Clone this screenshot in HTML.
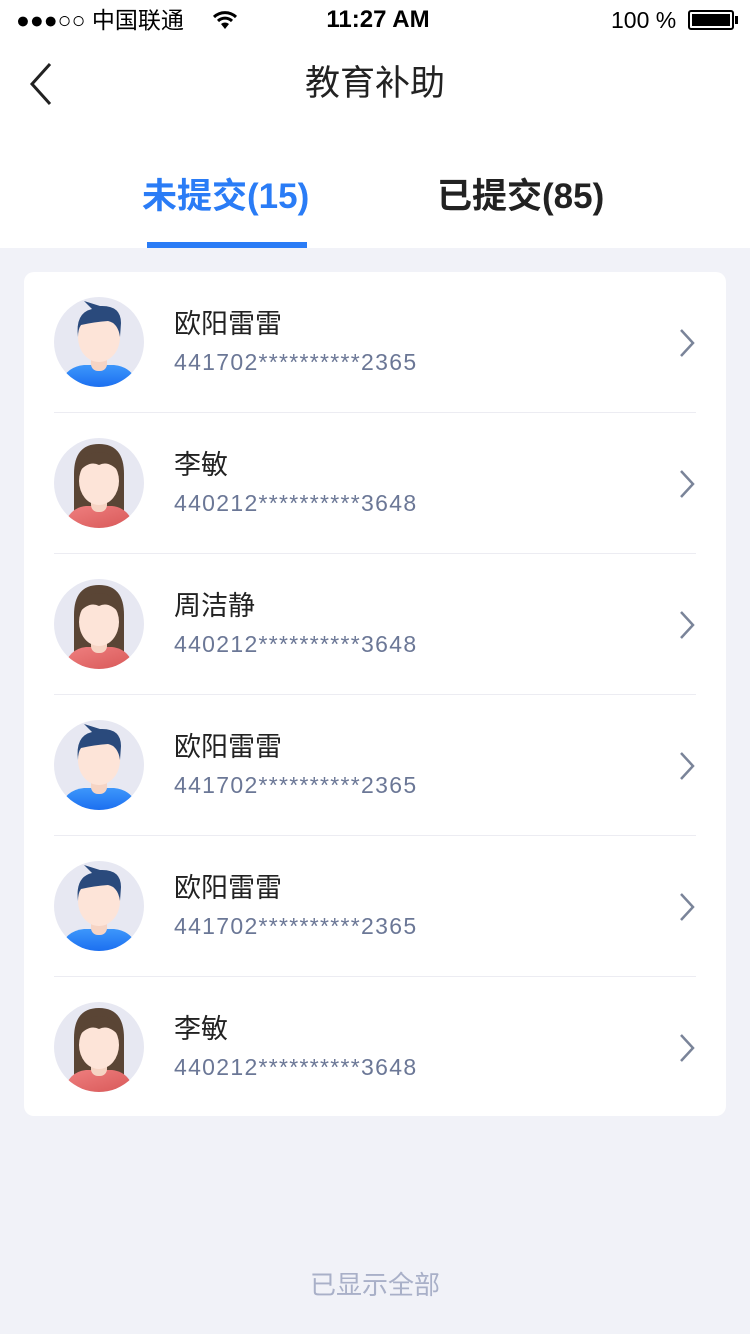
<!DOCTYPE html>
<html><head><meta charset="utf-8"><style>
*{margin:0;padding:0;box-sizing:border-box}
body{width:750px;height:1334px;background:#f1f2f8;font-family:"Liberation Sans","Noto Sans CJK SC",sans-serif;position:relative;overflow:hidden}
.top{position:absolute;left:0;top:0;width:750px;height:248px;background:#fff}
.abs{position:absolute}
.card{position:absolute;left:24px;top:272px;width:702px;height:844px;background:#fff;border-radius:10px}
.row{position:absolute;left:0;width:702px;height:141px}
.row .av{position:absolute;left:30px;top:25px;width:90px;height:90px}
.name{position:absolute;left:150px;top:35px;font-size:27px;color:#222;line-height:34px}
.id{position:absolute;left:150px;top:75px;font-size:23px;color:#6b7796;line-height:30px;letter-spacing:1.3px}
.chev{position:absolute;left:654px;top:56px}
.line{position:absolute;left:30px;right:30px;bottom:0;height:1px;background:#ececf2}
</style></head><body>
<div class="top"></div>
<div class="abs" style="left:16px;top:5px;font-size:23px;color:#000;line-height:30px">●●●○○ 中国联通</div>
<svg class="abs" style="left:212px;top:10px" width="26" height="20" viewBox="0 0 26 20"><path d="M2 7 A16 16 0 0 1 24 7" stroke="#000" stroke-width="3" fill="none"/><path d="M6 11 A10 10 0 0 1 20 11" stroke="#000" stroke-width="3" fill="none"/><path d="M9 14 L13 19 L17 14 A6 6 0 0 0 9 14Z" fill="#000"/></svg>
<div class="abs" style="left:0;width:756px;text-align:center;top:5px;font-size:24px;font-weight:bold;line-height:30px">11:27 AM</div>
<div class="abs" style="left:611px;top:5px;font-size:23px;line-height:30px">100 %</div>
<div class="abs" style="left:688px;top:10px;width:46px;height:20px;border:2px solid #000;border-radius:3px;padding:2px"><div style="width:100%;height:100%;background:#000"></div></div>
<div class="abs" style="left:735px;top:16px;width:3px;height:8px;background:#000"></div>
<svg class="abs" style="left:28px;top:62px" width="26" height="44" viewBox="0 0 26 44"><path d="M22 2 L4 22 L22 42" stroke="#222" stroke-width="3" fill="none"/></svg>
<div class="abs" style="left:0;width:750px;text-align:center;top:63px;font-size:35px;color:#222;line-height:42px">教育补助</div>
<div class="abs" style="left:142px;top:175px;font-size:35px;font-weight:bold;color:#2a7cf6;line-height:44px">未提交(15)</div>
<div class="abs" style="left:147px;top:242px;width:160px;height:6px;background:#2a7cf6"></div>
<div class="abs" style="left:437px;top:175px;font-size:35px;font-weight:bold;color:#222;line-height:44px">已提交(85)</div>
<svg width="0" height="0" style="position:absolute"><defs>
<linearGradient id="bl" x1="0" y1="0" x2="0" y2="1"><stop offset="0" stop-color="#3d97fb"/><stop offset="1" stop-color="#1c6ff0"/></linearGradient>
<linearGradient id="rd" x1="0" y1="0" x2="1" y2="1"><stop offset="0" stop-color="#ef8080"/><stop offset="1" stop-color="#d85858"/></linearGradient>
<clipPath id="cc"><circle cx="45" cy="45" r="45"/></clipPath>
<symbol id="m" viewBox="0 0 90 90"><circle cx="45" cy="45" r="45" fill="#e7e8f2"/><g clip-path="url(#cc)"><path d="M6 90 Q10 70 30 68 L60 68 Q80 70 84 90Z" fill="url(#bl)"/><rect x="37" y="56" width="16" height="18" rx="7" fill="#f6d4c4"/><ellipse cx="45" cy="40" rx="21" ry="25" fill="#fde4d8"/><path d="M24 40 Q21 16 38 12 L30 4 L46 9 Q67 8 67 26 L66 40 Q64 26 54 24 Q40 25 27 28 Q24 32 24 40Z" fill="#2a4a7c"/></g></symbol>
<symbol id="f" viewBox="0 0 90 90"><circle cx="45" cy="45" r="45" fill="#e7e8f2"/><g clip-path="url(#cc)"><path d="M20 80 L20 36 Q20 6 45 6 Q70 6 70 36 L70 80Z" fill="#5a4535"/><path d="M10 90 Q14 70 32 68 L58 68 Q76 70 80 90Z" fill="url(#rd)"/><rect x="37" y="56" width="16" height="18" rx="7" fill="#f6d4c4"/><ellipse cx="45" cy="43" rx="20" ry="24" fill="#fde4d8"/><path d="M25 34 Q28 14 45 14 Q62 14 65 34 Q55 22 45 27 Q35 22 25 34Z" fill="#5a4535"/></g></symbol>
</defs></svg>
<div class="card">
<div class="row" style="top:0"><svg class="av"><use href="#m"/></svg><div class="name">欧阳雷雷</div><div class="id">441702**********2365</div><svg class="chev" width="18" height="30"><path d="M3 2 L15 15 L3 28" stroke="#7a8499" stroke-width="2.5" fill="none"/></svg><div class="line"></div></div>
<div class="row" style="top:141px"><svg class="av"><use href="#f"/></svg><div class="name">李敏</div><div class="id">440212**********3648</div><svg class="chev" width="18" height="30"><path d="M3 2 L15 15 L3 28" stroke="#7a8499" stroke-width="2.5" fill="none"/></svg><div class="line"></div></div>
<div class="row" style="top:282px"><svg class="av"><use href="#f"/></svg><div class="name">周洁静</div><div class="id">440212**********3648</div><svg class="chev" width="18" height="30"><path d="M3 2 L15 15 L3 28" stroke="#7a8499" stroke-width="2.5" fill="none"/></svg><div class="line"></div></div>
<div class="row" style="top:423px"><svg class="av"><use href="#m"/></svg><div class="name">欧阳雷雷</div><div class="id">441702**********2365</div><svg class="chev" width="18" height="30"><path d="M3 2 L15 15 L3 28" stroke="#7a8499" stroke-width="2.5" fill="none"/></svg><div class="line"></div></div>
<div class="row" style="top:564px"><svg class="av"><use href="#m"/></svg><div class="name">欧阳雷雷</div><div class="id">441702**********2365</div><svg class="chev" width="18" height="30"><path d="M3 2 L15 15 L3 28" stroke="#7a8499" stroke-width="2.5" fill="none"/></svg><div class="line"></div></div>
<div class="row" style="top:705px"><svg class="av"><use href="#f"/></svg><div class="name">李敏</div><div class="id">440212**********3648</div><svg class="chev" width="18" height="30"><path d="M3 2 L15 15 L3 28" stroke="#7a8499" stroke-width="2.5" fill="none"/></svg></div>
</div>
<div class="abs" style="left:0;width:750px;text-align:center;top:1269px;font-size:26px;color:#a9b0c8;line-height:32px">已显示全部</div>
</body></html>
